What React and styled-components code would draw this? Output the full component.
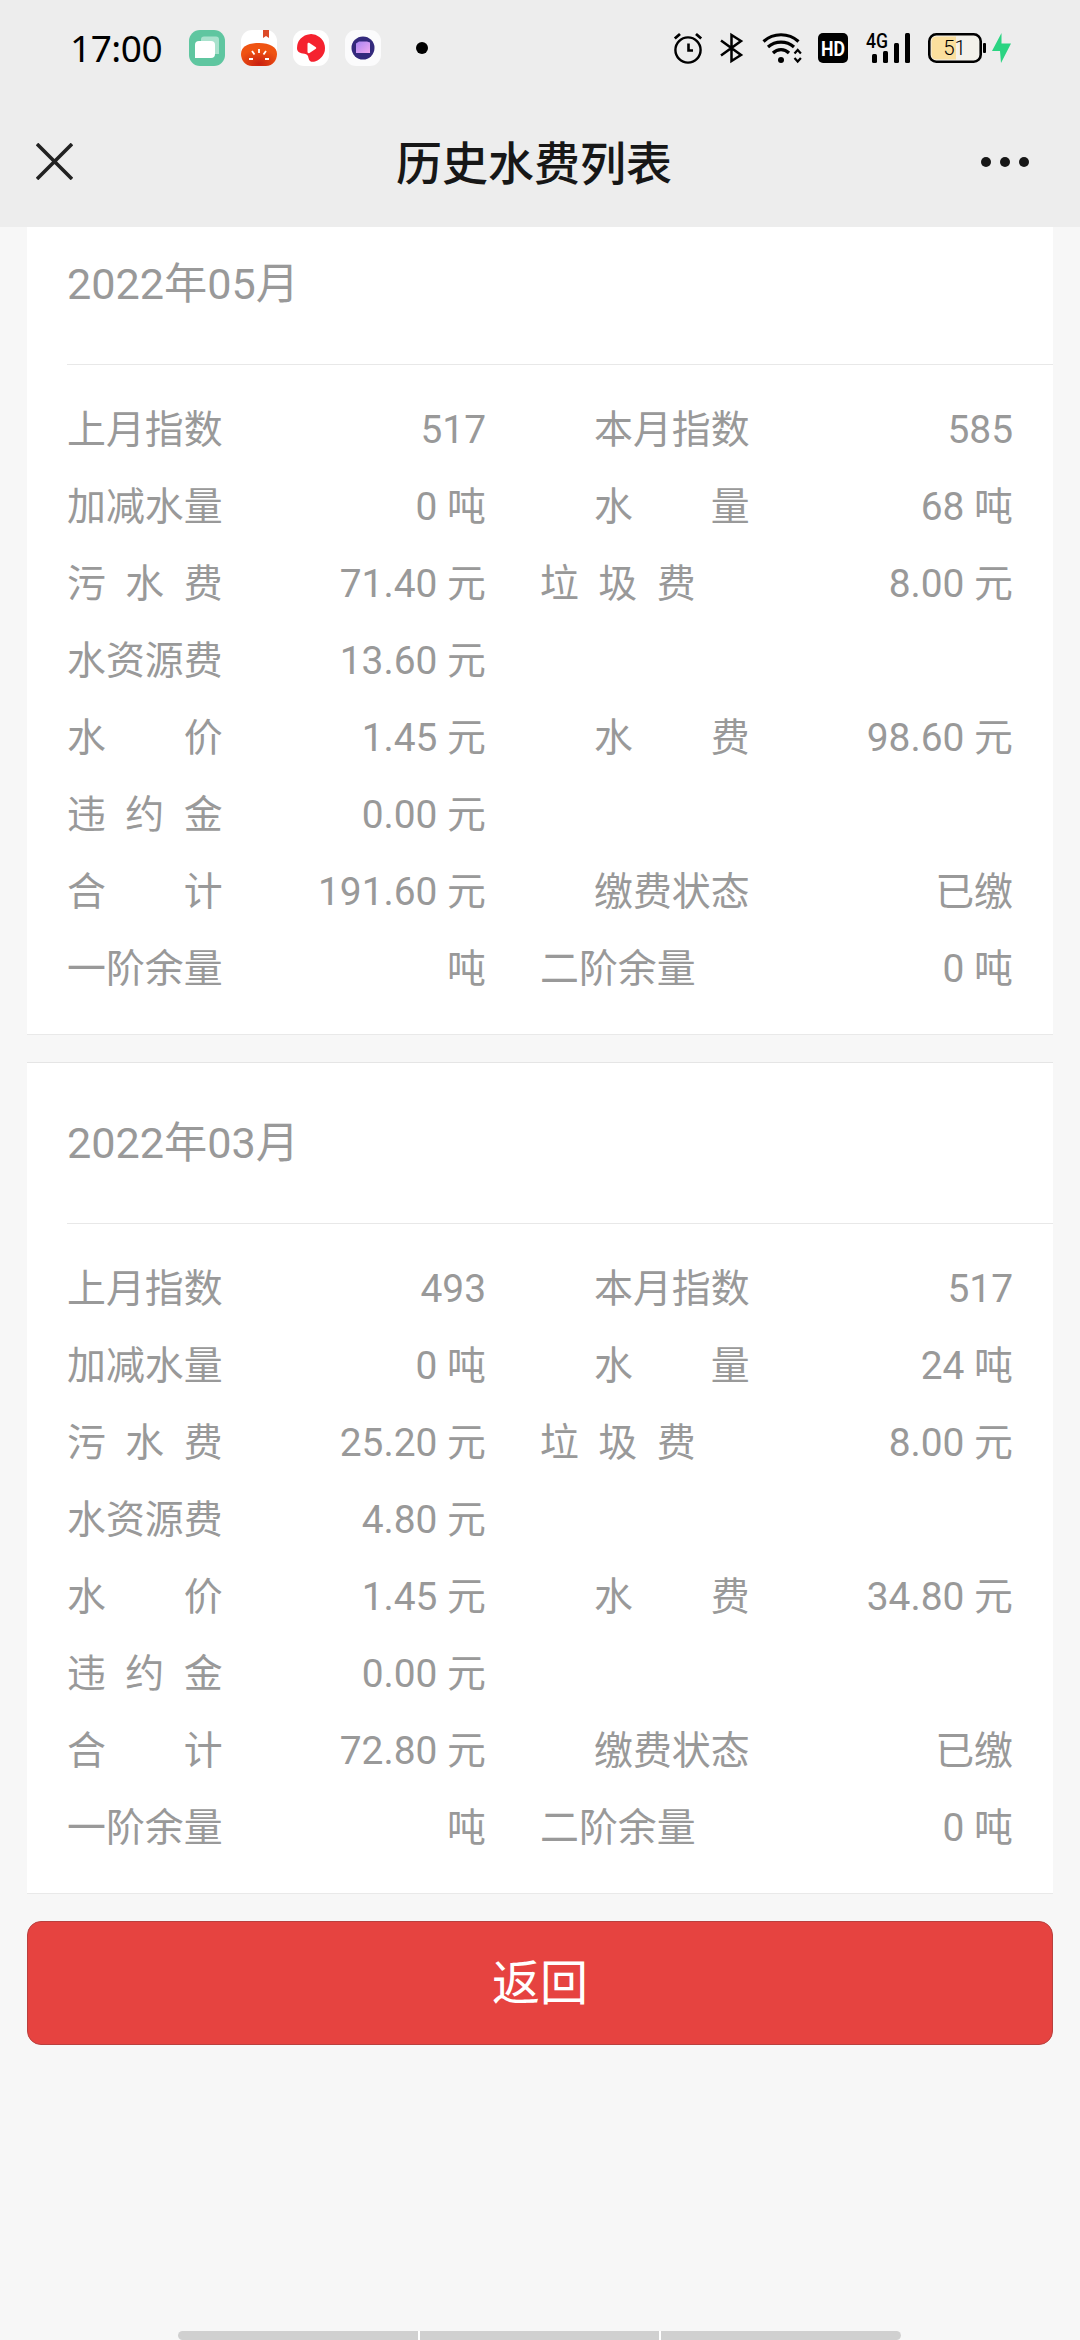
import React from "react";
import styled, { createGlobalStyle } from "styled-components";

const GlobalStyle = createGlobalStyle`
  * {
    box-sizing: border-box;
  }
  body {
    margin: 0;
    background: #f7f7f7;
    font-family: Roboto, "Noto Sans CJK SC", sans-serif;
  }
`;

const bills = [
  {
    month: "2022年05月",
    rows: [
      ["上月指数", "517", "本月指数", "585"],
      ["加减水量", "0 吨", "水量", "68 吨"],
      ["污水费", "71.40 元", "垃圾费", "8.00 元"],
      ["水资源费", "13.60 元"],
      ["水价", "1.45 元", "水费", "98.60 元"],
      ["违约金", "0.00 元"],
      ["合计", "191.60 元", "缴费状态", "已缴"],
      ["一阶余量", "吨", "二阶余量", "0 吨"],
    ],
  },
  {
    month: "2022年03月",
    rows: [
      ["上月指数", "493", "本月指数", "517"],
      ["加减水量", "0 吨", "水量", "24 吨"],
      ["污水费", "25.20 元", "垃圾费", "8.00 元"],
      ["水资源费", "4.80 元"],
      ["水价", "1.45 元", "水费", "34.80 元"],
      ["违约金", "0.00 元"],
      ["合计", "72.80 元", "缴费状态", "已缴"],
      ["一阶余量", "吨", "二阶余量", "0 吨"],
    ],
  },
];

// these two labels start right at the middle of the card
const flushLabels = ["垃圾费", "二阶余量"];

const Page = styled.div`
  height: 2340px;
  display: flex;
  flex-direction: column;
  overflow: hidden;
`;

const Header = styled.header`
  height: 227px;
  flex: none;
  background: #ededed;
`;

const StatusBar = styled.div`
  height: 96px;
  padding: 0 70px 0 70px;
  display: flex;
  align-items: center;
  svg {
    display: block;
    overflow: visible;
  }
`;

const Clock = styled.span`
  width: 119px;
  font-family: "Noto Sans", sans-serif;
  font-size: 37px;
  letter-spacing: -0.5px;
  line-height: 50px;
  padding-bottom: 1px;
  color: #000;
`;

const AppIcons = styled.div`
  display: flex;
  align-items: center;
  gap: 16px;
  flex: 1;
`;

const MoreDot = styled.span`
  width: 12px;
  height: 12px;
  margin-left: 19px;
  border-radius: 50%;
  background: #000;
`;

const SystemIcons = styled.div`
  display: flex;
  align-items: center;
  gap: 18px;
`;

const WifiHd = styled.div`
  display: flex;
  gap: 15px;
`;

const Power = styled.div`
  display: flex;
  gap: 5px;
`;

const NavBar = styled.div`
  height: 131px;
  padding: 0 51px 0 36px;
  display: flex;
  align-items: center;
  justify-content: space-between;
`;

const NavTitle = styled.h1`
  margin: 0;
  padding: 0 0 4px 14px;
  font-family: "Noto Sans CJK SC", sans-serif;
  font-size: 46px;
  font-weight: 500;
  line-height: 60px;
  color: #171717;
`;

const List = styled.main`
  flex: 1;
  padding: 0 27px;
  overflow: hidden;
`;

const Card = styled.section`
  margin-top: ${(props) => (props.$scrolled ? "-24px" : "27px")};
  background: #fff;
  border-top: 1px solid #e5e5e5;
  border-bottom: 1px solid #e9e9e9;
  color: #999;
`;

const CardHead = styled.h2`
  height: 161px;
  margin: 0 0 0 40px;
  padding-bottom: 8px;
  border-bottom: 1px solid #e8e8e8;
  display: flex;
  align-items: center;
  font-size: 43.2px;
  font-weight: 400;
`;

const CardBody = styled.div`
  padding: 26px 40px 27px;
`;

const Row = styled.div`
  height: 77px;
  display: grid;
  grid-template-columns: 419px 1fr;
  column-gap: 54px;
  align-items: center;
  font-size: 38.9px;
  line-height: 77px;
`;

const Field = styled.div`
  display: flex;
  justify-content: space-between;
  padding-left: ${(props) => (props.$indent ? "54px" : "0")};
`;

const Label = styled.span`
  width: 4em;
  text-align: justify;
  text-align-last: justify;
  white-space: nowrap;
`;

const Value = styled.span`
  white-space: nowrap;
`;

const BackButton = styled.button`
  display: block;
  width: 100%;
  height: 124px;
  margin-top: 27px;
  padding: 0 0 8px;
  border: 1px solid #b9403e;
  border-radius: 14px;
  background: #e64340;
  color: #fff;
  font-family: "Noto Sans CJK SC", sans-serif;
  font-size: 48px;
`;

const GestureBar = styled.div`
  width: 723px;
  height: 9px;
  margin: 0 0 0 178px;
  display: flex;
  gap: 2px;
  flex: none;
  background: #fff;
  border-radius: 5px;
  overflow: hidden;
`;

const GesturePart = styled.span`
  flex: 1;
  background: #d0d0d0;
`;

const ChatIcon = () => (
  <svg width="36" height="36" viewBox="0 0 36 36">
    <rect width="36" height="36" rx="11" fill="#5fc6a0" />
    <path d="M15 6.500h12a3 3 0 0 1 3 3V24H12V9.500a3 3 0 0 1 3-3z" fill="#a9e2cd" />
    <path d="M10 11h12a4 4 0 0 1 4 4v9a4 4 0 0 1-4 4H6V15a4 4 0 0 1 4-4z" fill="#fff" />
  </svg>
);

const TomatoIcon = () => (
  <svg width="36" height="36" viewBox="0 0 36 36">
    <defs>
      <radialGradient id="tomato" cx="0.5" cy="0.9" r="0.6">
        <stop offset="0" stopColor="#c92010" />
        <stop offset="1" stopColor="#ef5312" />
      </radialGradient>
    </defs>
    <rect width="36" height="36" rx="11" fill="#fff" />
    <path d="M22 0h6v8l-3-2-3 2z" fill="#dc4a28" />
    <path d="M18 13c11 0 18 4 18 11 0 6-4 12-11 12H11C4 36 0 30 0 24c0-7 7-11 18-11z" fill="url(#tomato)" />
    <path d="M18 19v4M11 21l2.500 3.500M25 21l-2.500 3.500M8 29h4M24 29h4" stroke="#fff" strokeWidth="1.800" />
  </svg>
);

const VideoIcon = () => (
  <svg width="36" height="36" viewBox="0 0 36 36">
    <rect width="36" height="36" rx="11" fill="#fff" />
    <path d="M4 18A14 14 0 1 1 22 31.500c-3 1-6 0-6.500-3.500-.4-2.500-1.500-4-4-4.300C7 23.500 4 22 4 18z" fill="#f5222f" />
    <path d="M14.500 14c0-1 1-1.500 2-1l6 4c1 .6 1 1.400 0 2l-6 4c-1 .5-2 0-2-1z" fill="#fff" />
  </svg>
);

const LensIcon = () => (
  <svg width="36" height="36" viewBox="0 0 36 36">
    <defs>
      <linearGradient id="lens" x1="0" y1="0" x2="1" y2="1">
        <stop offset="0" stopColor="#a985f2" />
        <stop offset="1" stopColor="#f0aaf0" />
      </linearGradient>
    </defs>
    <rect width="36" height="36" rx="11" fill="#fbfbfc" />
    <circle cx="18" cy="18" r="11.500" fill="#33297c" />
    <path d="M11 13.500l3-2h8l3 1V23H11z" fill="url(#lens)" />
  </svg>
);

const AlarmIcon = () => (
  <svg width="28" height="32" viewBox="0 0 28 32" fill="none" stroke="#000" strokeWidth="2.400">
    <circle cx="14" cy="18" r="12.600" />
    <path d="M14.500 11.500v7h4.500" strokeWidth="2.600" />
    <path d="M.8 6.500L6 2M27.200 6.500L22 2" strokeWidth="2.800" />
  </svg>
);

const BluetoothIcon = () => (
  <svg width="24" height="30" viewBox="0 0 24 30" fill="none" stroke="#000" strokeWidth="2.500">
    <path d="M1 7.500l20 14.500-9.500 6V2L21 8 1 22.500" />
  </svg>
);

const WifiIcon = () => (
  <svg width="41" height="30" viewBox="0 0 41 30" fill="none" stroke="#000" strokeWidth="3.200">
    <path d="M1.500 8.500C11.500-.5 26.500-.5 36.500 8.500" />
    <path d="M6 14c7.500-6.500 18.500-6.500 26 0" />
    <path d="M11 20c4.500-4.500 11.500-4.500 16 0" />
    <circle cx="19" cy="27" r="3" fill="#000" stroke="none" />
    <path d="M32.500 20.500l3.200-3.500 3.200 3.500M32.500 25l3.200 3.500 3.200-3.500" strokeWidth="2.200" />
  </svg>
);

const HdIcon = () => (
  <svg width="30" height="30" viewBox="0 0 30 30">
    <rect width="30" height="30" rx="5" fill="#000" />
    <text x="15" y="22.500" textAnchor="middle" textLength="24" lengthAdjust="spacingAndGlyphs" fontFamily="Roboto" fontSize="21" fontWeight="700" fill="#fff">
      HD
    </text>
  </svg>
);

const SignalIcon = () => (
  <svg width="44" height="30" viewBox="0 0 44 30">
    <text x="0" y="14.500" textLength="22" lengthAdjust="spacingAndGlyphs" fontFamily="Roboto" fontSize="20" fontWeight="500">
      4G
    </text>
    <rect x="6" y="21" width="5" height="9" rx="1.500" />
    <rect x="17" y="18" width="5" height="12" rx="1.500" />
    <rect x="28" y="10" width="5" height="20" rx="1.500" />
    <rect x="39" y="0" width="5" height="30" rx="1.500" />
  </svg>
);

const BatteryIcon = () => (
  <svg width="59" height="30" viewBox="0 0 59 30">
    <rect x="1.300" y="1.300" width="51.400" height="27.400" rx="7" fill="#f3f1ea" stroke="#000" strokeWidth="2.600" />
    <path d="M8 3.500h20v23H8a4.500 4.500 0 0 1-4.500-4.500V8A4.500 4.500 0 0 1 8 3.500z" fill="#fbdf9d" />
    <rect x="55" y="10" width="3" height="10" rx="1" />
    <text x="26.500" y="22" textAnchor="middle" fontFamily="Roboto" fontSize="20.500" fontWeight="300">
      51
    </text>
  </svg>
);

const BoltIcon = () => (
  <svg width="18" height="30" viewBox="0 0 18 30">
    <path d="M9.500 0L0 18h8l1 12L19 10.500h-9.500z" fill="#2bd482" />
  </svg>
);

const CloseIcon = () => (
  <svg width="37" height="37" viewBox="0 0 37 37" stroke="#222" strokeWidth="3.600">
    <path d="M1 1l35 35M36 1L1 36" />
  </svg>
);

const MoreIcon = () => (
  <svg width="48" height="10" viewBox="0 0 48 10" fill="#171717">
    <circle cx="5" cy="5" r="5" />
    <circle cx="24" cy="5" r="5" />
    <circle cx="43" cy="5" r="5" />
  </svg>
);

const BillCard = ({ bill, scrolled }) => (
  <Card $scrolled={scrolled}>
    <CardHead>{bill.month}</CardHead>
    <CardBody>
      {bill.rows.map(([label, value, label2, value2]) => (
        <Row key={label}>
          <Field>
            <Label>{label}</Label>
            <Value>{value}</Value>
          </Field>
          {label2 && (
            <Field $indent={!flushLabels.includes(label2)}>
              <Label>{label2}</Label>
              <Value>{value2}</Value>
            </Field>
          )}
        </Row>
      ))}
    </CardBody>
  </Card>
);

const App = () => {
  return (
    <Page>
      <GlobalStyle />
      <Header>
        <StatusBar>
          <Clock>17:00</Clock>
          <AppIcons>
            <ChatIcon />
            <TomatoIcon />
            <VideoIcon />
            <LensIcon />
            <MoreDot />
          </AppIcons>
          <SystemIcons>
            <AlarmIcon />
            <BluetoothIcon />
            <WifiHd>
              <WifiIcon />
              <HdIcon />
            </WifiHd>
            <SignalIcon />
            <Power>
              <BatteryIcon />
              <BoltIcon />
            </Power>
          </SystemIcons>
        </StatusBar>
        <NavBar>
          <CloseIcon />
          <NavTitle>历史水费列表</NavTitle>
          <MoreIcon />
        </NavBar>
      </Header>
      <List>
        {bills.map((bill, i) => (
          <BillCard key={bill.month} bill={bill} scrolled={i === 0} />
        ))}
        <BackButton>返回</BackButton>
      </List>
      <GestureBar>
        <GesturePart />
        <GesturePart />
        <GesturePart />
      </GestureBar>
    </Page>
  );
};

export default App;
